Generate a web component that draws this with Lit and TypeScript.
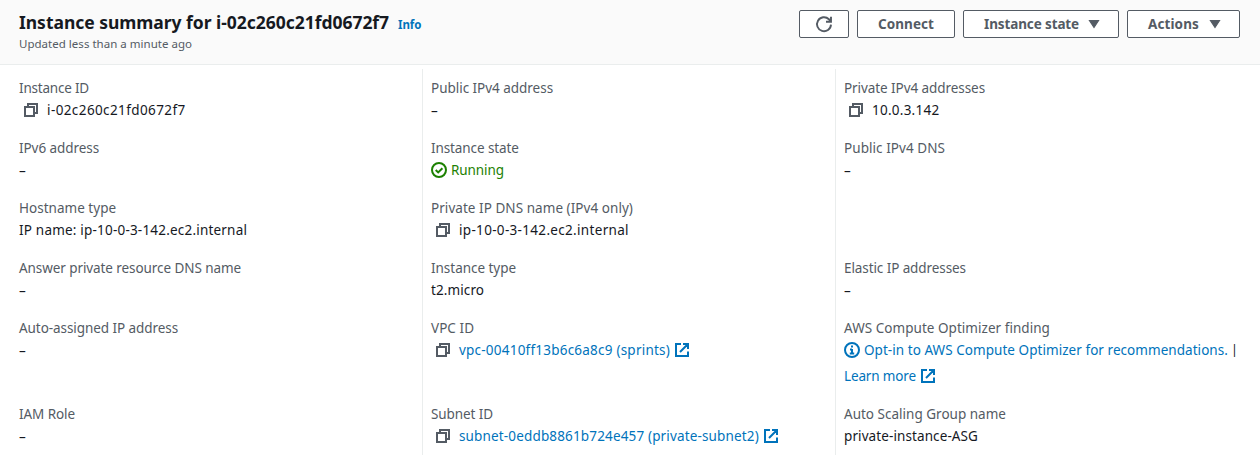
import { LitElement, html, css, svg, nothing } from "lit";
import { customElement, property } from "lit/decorators.js";

type IconName = "copy" | "external" | "check" | "info" | "refresh" | "caret";

const shapes = {
  copy: svg`<path d="M2 5h9v9H2zM5 5V2h9v9h-3" />`,
  external: svg`<path d="M7 2H2v12h12V9.5M9 2h5v5M14 2 6 10" />`,
  check: svg`<circle cx="8" cy="8" r="7" /><path d="m4.7 8 2.5 2.4 4.2-4.2" />`,
  info: svg`<circle cx="8" cy="8" r="7" /><path d="M8 7v5M6 7.6h2M5.8 11.4h4.4M7 4.6h2" />`,
  refresh: svg`<path d="M15 8.6A7 7 0 1 1 12.9 3.2L15 5.3M15 .8v4.9h-5" />`,
  caret: svg`<path d="M3.5 4.5h9L8 11.5z" fill="currentColor" />`,
};

@customElement("ui-icon")
class UiIcon extends LitElement {
  @property() name: IconName = "copy";

  static styles = css`
    :host { display: block; width: 16px; height: 16px; flex: none; }
    svg { display: block; width: 16px; height: 16px; overflow: visible; fill: none; stroke: currentColor; stroke-width: 2; }
    .refresh { stroke-width: 1.9; }
    .caret { stroke-width: 1.2; }
  `;

  render() {
    return html`<svg class=${this.name} viewBox="0 0 16 16" aria-hidden="true">${shapes[this.name]}</svg>`;
  }
}

interface Label {
  text: string;
  tracking: number;
}

interface Field {
  label: Label;
  value?: Label;
  kind?: "copy" | "copy-link" | "status" | "optimizer";
}

const t = (text: string, tracking = 0): Label => ({ text, tracking });

const columns: (Field | null)[][] = [
  [
    { label: t("Instance ID", -0.2), value: t("i-02c260c21fd0672f7", 0.4), kind: "copy" },
    { label: t("IPv6 address", -0.07) },
    { label: t("Hostname type", 0.02), value: t("IP name: ip-10-0-3-142.ec2.internal", 0.2) },
    { label: t("Answer private resource DNS name", -0.08) },
    { label: t("Auto-assigned IP address", -0.07) },
    { label: t("IAM Role", -0.08) },
  ],
  [
    { label: t("Public IPv4 address", -0.03) },
    { label: t("Instance state", -0.1), value: t("Running", -0.08), kind: "status" },
    { label: t("Private IP DNS name (IPv4 only)", 0.05), value: t("ip-10-0-3-142.ec2.internal", 0.32), kind: "copy" },
    { label: t("Instance type", -0.03), value: t("t2.micro", 0.1) },
    { label: t("VPC ID", 0.05), value: t("vpc-00410ff13b6c6a8c9 (sprints)", 0.22), kind: "copy-link" },
    { label: t("Subnet ID", -0.09), value: t("subnet-0eddb8861b724e457 (private-subnet2)", 0.15), kind: "copy-link" },
  ],
  [
    { label: t("Private IPv4 addresses", -0.07), value: t("10.0.3.142", 0.25), kind: "copy" },
    { label: t("Public IPv4 DNS", 0.06) },
    null,
    { label: t("Elastic IP addresses", -0.09) },
    { label: t("AWS Compute Optimizer finding", 0.04), kind: "optimizer" },
    { label: t("Auto Scaling Group name", 0.01), value: t("private-instance-ASG", 0.1) },
  ],
];

@customElement("app-root")
class AppRoot extends LitElement {
  static styles = css`
    :host {
      display: block;
      height: 461px;
      overflow: hidden;
      background: #fff;
      color: #16191f;
      font: 13.5px/22px "Noto Sans", "Open Sans", sans-serif;
      white-space: nowrap;
    }
    .header {
      box-sizing: border-box;
      height: 65px;
      padding: 10px 20px 0 19px;
      display: flex;
      justify-content: space-between;
      align-items: flex-start;
      background: #fafafa;
      border-bottom: 1px solid #eaeded;
    }
    .heading { display: flex; align-items: baseline; gap: 9px; }
    .title { margin: 0; font-size: 17.5px; line-height: 24px; font-weight: 700; }
    .info { font-size: 11.5px; line-height: 16px; font-weight: 700; color: #0073bb; }
    .updated { font-size: 11.5px; line-height: 16px; color: #545b64; margin-top: 2px; }
    .actions { display: flex; gap: 8px; }
    .button {
      box-sizing: border-box;
      height: 28px;
      margin: 0;
      padding: 0 0 0 20px;
      display: flex;
      align-items: center;
      border: 1px solid #545b64;
      border-radius: 2px;
      background: #fff;
      color: #545b64;
      font: inherit;
      font-weight: 700;
    }
    .refresh { width: 50px; padding: 0; justify-content: center; }
    .connect { width: 98px; }
    .state { width: 156px; }
    .menu { width: 113px; }
    .caret { margin: 0 16px 0 auto; }
    .details { display: grid; grid-template-columns: 422px 413px 1fr; padding-top: 4px; }
    .column {
      display: grid;
      grid-template-rows: repeat(4, 44px) 70px 44px;
      row-gap: 16px;
      padding: 8px 0 8px 8px;
      border-left: 1px solid #eaeded;
    }
    .column:first-child { padding-left: 19px; border-left: 0; }
    .label { color: #545b64; }
    .value, .line { display: flex; align-items: center; height: 22px; }
    .line + .line { margin-top: 4px; }
    .empty { padding-top: 2px; height: 20px; }
    .copy { margin: 0 8px 0 4px; color: #545b64; }
    .link { color: #0073bb; }
    .external { margin-left: 4px; color: #0073bb; }
    .status { color: #1d8102; gap: 4px; }
    .notice { color: #0073bb; margin-right: 4px; }
    .bar { margin-left: 3px; font-size: 12.5px; }
  `;

  private text(l: Label, cls = "") {
    return html`<span class=${cls} style="letter-spacing:${l.tracking}px">${l.text}</span>`;
  }

  private value(f: Field) {
    if (f.kind === "optimizer") {
      return html`<div class="line">
          <ui-icon class="notice" name="info"></ui-icon>${this.text(t("Opt-in to AWS Compute Optimizer for recommendations.", 0.05), "link")}<span class="bar">|</span>
        </div>
        <div class="line">
          ${this.text(t("Learn more", -0.14), "link")}<ui-icon class="external" name="external"></ui-icon>
        </div>`;
    }
    if (!f.value) return html`<div class="value empty">–</div>`;
    switch (f.kind) {
      case "copy":
        return html`<div class="value"><ui-icon class="copy" name="copy"></ui-icon>${this.text(f.value)}</div>`;
      case "copy-link":
        return html`<div class="value">
          <ui-icon class="copy" name="copy"></ui-icon>${this.text(f.value, "link")}<ui-icon class="external" name="external"></ui-icon>
        </div>`;
      case "status":
        return html`<div class="value status"><ui-icon name="check"></ui-icon>${this.text(f.value)}</div>`;
      default:
        return html`<div class="value">${this.text(f.value)}</div>`;
    }
  }

  render() {
    return html`
      <header class="header">
        <div>
          <div class="heading">
            <h1 class="title">${this.text(t("Instance summary for i-02c260c21fd0672f7", -0.03))}</h1>
            ${this.text(t("Info", -0.1), "info")}
          </div>
          <div class="updated">${this.text(t("Updated less than a minute ago", 0.02))}</div>
        </div>
        <div class="actions">
          <button class="button refresh" aria-label="Refresh"><ui-icon name="refresh"></ui-icon></button>
          <button class="button connect">${this.text(t("Connect", 0.06))}</button>
          <button class="button state">${this.text(t("Instance state", -0.12))}<ui-icon class="caret" name="caret"></ui-icon></button>
          <button class="button menu">${this.text(t("Actions", 0.1))}<ui-icon class="caret" name="caret"></ui-icon></button>
        </div>
      </header>
      <main class="details">
        ${columns.map(
          (col) => html`<section class="column">
            ${col.map((f) => html`<div>${f ? html`<div class="label">${this.text(f.label)}</div>${this.value(f)}` : nothing}</div>`)}
          </section>`
        )}
      </main>
    `;
  }
}
